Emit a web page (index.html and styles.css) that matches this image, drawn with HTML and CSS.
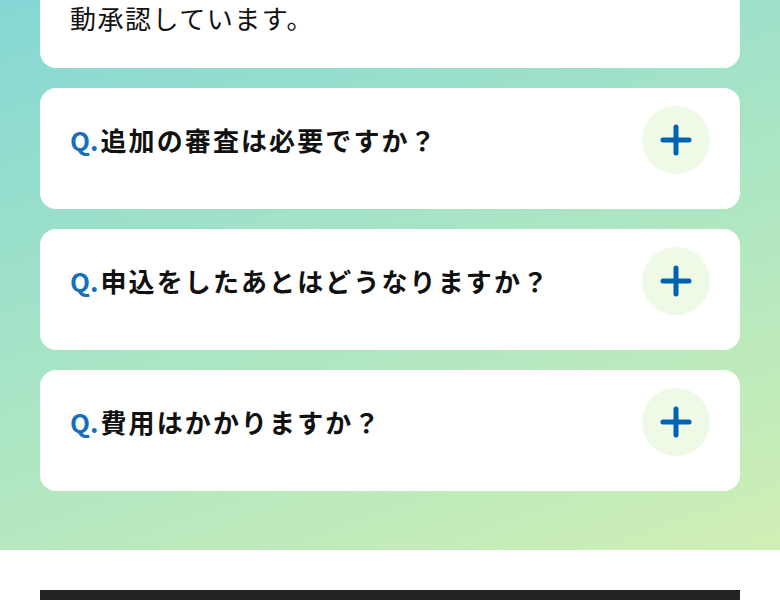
FILE: index.html
```html
<!DOCTYPE html>
<html lang="ja">
<head>
<meta charset="utf-8">
<link rel="stylesheet" href="styles.css">
</head>
<body>
<section class="faq">
  <div class="card card-answer">
    <p class="answer">動承認しています。</p>
  </div>
  <div class="card">
    <h3 class="question"><span class="q">Q.</span>追加の審査は必要ですか？</h3>
    <span class="toggle"><svg viewBox="0 0 68 68" width="68" height="68"><path d="M34 21v26M21 34h26" stroke="#0063b1" stroke-width="5" stroke-linecap="round" fill="none"/></svg></span>
  </div>
  <div class="card">
    <h3 class="question"><span class="q">Q.</span>申込をしたあとはどうなりますか？</h3>
    <span class="toggle"><svg viewBox="0 0 68 68" width="68" height="68"><path d="M34 21v26M21 34h26" stroke="#0063b1" stroke-width="5" stroke-linecap="round" fill="none"/></svg></span>
  </div>
  <div class="card">
    <h3 class="question"><span class="q">Q.</span>費用はかかりますか？</h3>
    <span class="toggle"><svg viewBox="0 0 68 68" width="68" height="68"><path d="M34 21v26M21 34h26" stroke="#0063b1" stroke-width="5" stroke-linecap="round" fill="none"/></svg></span>
  </div>
</section>
<div class="spacer"></div>
<footer class="footer-bar"></footer>
</body>
</html>
```
FILE: styles.css
```css
* { box-sizing: border-box; }
html, body { margin: 0; padding: 0; background: #fff; }
body {
  font-family: "Noto Sans CJK JP", "Noto Sans", sans-serif;
  color: #111;
  overflow: hidden;
}
.faq {
  background: linear-gradient(160deg, #84d7d5 0%, #a6e4c6 45%, #d0efb4 100%);
  padding: 0 40px 59px;
  display: flex;
  flex-direction: column;
  gap: 20.5px;
}
.card {
  background: #fff;
  border-radius: 16px;
  padding: 18px 30px 34.5px;
  display: flex;
  align-items: flex-start;
  justify-content: space-between;
}
.card-answer {
  margin-top: -40px;
  padding: 40px 30px 31.5px;
}
.answer {
  margin: 0;
  font-size: 26px;
  line-height: 36px;
  letter-spacing: 1.5px;
  font-weight: 400;
}
.question {
  margin: 0;
  font-size: 26px;
  line-height: 68px;
  font-weight: 700;
  letter-spacing: 2.1px;
}
.q {
  color: #1470bb;
  letter-spacing: 0;
  margin-right: 2px;
}
.toggle {
  width: 68px;
  height: 68px;
  border-radius: 50%;
  background: #eef9e6;
  display: flex;
  flex-shrink: 0;
}
.spacer { height: 40.5px; }
.footer-bar {
  margin: 0 40px;
  height: 40px;
  background: #232323;
}
```
